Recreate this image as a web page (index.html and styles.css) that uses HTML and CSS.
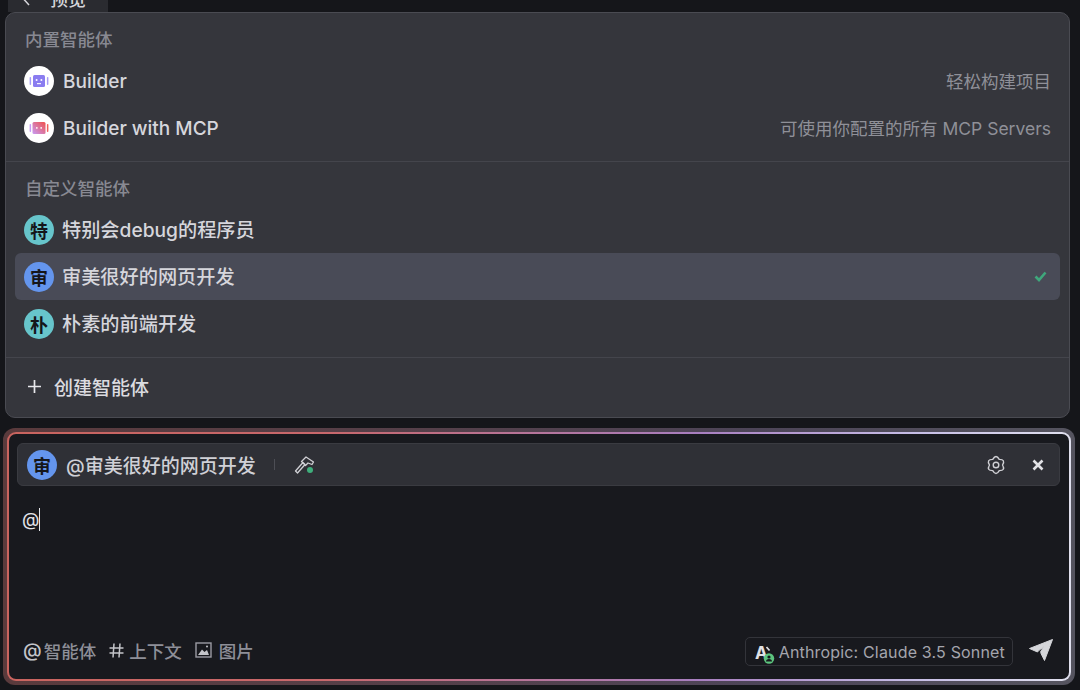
FILE: index.html
```html
<!DOCTYPE html>
<html lang="zh-CN">
<head>
<meta charset="utf-8">
<title>智能体</title>
<link rel="stylesheet" href="styles.css">
</head>
<body>
<div class="page">
  <div class="tab"><span class="tab-inner"><svg class="tab-chev" width="8" height="12" viewBox="0 0 8 12"><path d="M6 1 1.500 6 6 11" fill="none" stroke="#d5d5da" stroke-width="1.500"/></svg><span class="tab-text">预览</span></span></div>
  <section class="menu">
    <div class="group first">
      <div class="group-title">内置智能体</div>
      <div class="row">
        <span class="avatar white">
          <svg width="20" height="14" viewBox="0 0 20 14"><rect x="0.600" y="3" width="1.500" height="8" rx=".7" fill="#a79cf5"/><rect x="17.900" y="3" width="1.500" height="8" rx=".7" fill="#a79cf5"/><rect x="4" y="1" width="12" height="12" rx="1.500" fill="#8a7cf0"/><rect x="6.800" y="5" width="1.600" height="2" fill="#f4f2ff"/><rect x="11.600" y="5" width="1.600" height="2" fill="#f4f2ff"/><rect x="8" y="9" width="4" height="1.200" fill="#f4f2ff"/></svg>
        </span>
        <span class="name en">Builder</span>
        <span class="desc">轻松构建项目</span>
      </div>
      <div class="row">
        <span class="avatar white">
          <svg width="20" height="14" viewBox="0 0 20 14"><defs><linearGradient id="mcp" x1="1" y1="0" x2="0" y2="1"><stop offset="0" stop-color="#f0504a"/><stop offset="1" stop-color="#c79bf5"/></linearGradient></defs><rect x="0.600" y="3" width="1.500" height="8" rx=".7" fill="#c79bf5"/><rect x="17.900" y="3" width="1.500" height="8" rx=".7" fill="#f0605a"/><rect x="3.500" y="1" width="13" height="12" rx="1.500" fill="url(#mcp)"/><rect x="7" y="6" width="1.600" height="1.800" fill="#fbe6e6"/><rect x="11.400" y="6" width="1.600" height="1.800" fill="#fbe6e6"/></svg>
        </span>
        <span class="name en">Builder with MCP</span>
        <span class="desc">可使用你配置的所有 MCP Servers</span>
      </div>
    </div>
    <div class="group">
      <div class="group-title">自定义智能体</div>
      <div class="row">
        <span class="avatar teal">特</span>
        <span class="name">特别会debug的程序员</span>
      </div>
      <div class="row active">
        <span class="avatar blue">审</span>
        <span class="name">审美很好的网页开发</span>
        <svg class="check" width="13" height="11" viewBox="0 0 13 11"><path d="M1.500 5.500 5 9l6.500-7.500" fill="none" stroke="#3fa77c" stroke-width="2.600"/></svg>
      </div>
      <div class="row">
        <span class="avatar teal">朴</span>
        <span class="name">朴素的前端开发</span>
      </div>
    </div>
    <div class="create">
      <svg width="15" height="15" viewBox="0 0 15 15"><path d="M7.500 1v13M1 7.500h13" stroke="#e8e8ec" stroke-width="1.700"/></svg>
      <span>创建智能体</span>
    </div>
  </section>
  <section class="composer-ring">
    <div class="composer">
      <div class="agent-bar">
        <span class="avatar blue">审</span>
        <span class="agent-name">@审美很好的网页开发</span>
        <span class="bar-sep"></span>
        <svg class="hammer" width="22" height="22" viewBox="0 0 22 22"><path d="M1.500 17l2 2 7.500-8.500-2-2zM7.500 7.500 12 3l7.500 5-1.500 2.500-4-1.500-2.500 2.500z" fill="none" stroke="#d0d0d5" stroke-width="1.300" stroke-linejoin="round"/><circle cx="16" cy="16" r="3" fill="#3fae7c"/></svg>
        <span class="bar-spacer"></span>
        <svg class="gear" width="20" height="20" viewBox="0 0 20 20"><path d="M13.250 4.370Q19.870 4.300 16.500 10 19.870 15.700 13.250 15.630 10 21.400 6.750 15.630 .13 15.700 3.500 10 .13 4.300 6.750 4.370 10-1.400 13.250 4.370z" fill="none" stroke="#d0d0d5" stroke-width="1.400" stroke-linejoin="round"/><circle cx="10" cy="10" r="2.800" fill="none" stroke="#d0d0d5" stroke-width="1.400"/></svg>
        <svg class="close" width="12" height="12" viewBox="0 0 12 12"><path d="M1.500 1.500l9 9M10.500 1.500l-9 9" stroke="#e2e2e6" stroke-width="2.600"/></svg>
      </div>
      <div class="editor"><span class="at">@</span><span class="caret"></span></div>
      <div class="toolbar">
        <span class="tool"><span class="tool-sym">@</span>智能体</span>
        <span class="tool"><svg class="hash" width="15" height="15" viewBox="0 0 15 15"><path d="M5 .500 4 14.500M11 .500 10 14.500M.500 5h14M.500 10h14" fill="none" stroke="#c4c5ca" stroke-width="1.500"/></svg>上下文</span>
        <span class="tool"><svg class="pic" width="17" height="16" viewBox="0 0 17 16"><rect x="1" y="1" width="15" height="14" fill="none" stroke="#9a9ba3" stroke-width="1.400"/><path d="M3 13 7 7.500l2.500 2.500L12 8l2 5z" fill="#c4c5ca"/><circle cx="12" cy="4.500" r="1" fill="#c4c5ca"/></svg>图片</span>
        <span class="bar-spacer"></span>
        <span class="model">
          <span class="model-icon">
            <svg width="24" height="24" viewBox="0 0 24 24"><text class="model-a" x="0" y="19">A</text><path d="M11.500 7l3 3.500" stroke="#e0e0e4" stroke-width="1.700"/><circle cx="14" cy="18.500" r="5.200" fill="#5cc47e"/><circle cx="14" cy="17" r="1.600" fill="#17181c"/><path d="M10.900 21.500c.4-2 1.600-2.600 3.100-2.600s2.700.6 3.100 2.600z" fill="#17181c"/></svg>
          </span>
          <span class="model-name">Anthropic: Claude 3.5 Sonnet</span>
        </span>
        <svg class="send" width="26" height="26" viewBox="0 0 26 26"><path d="M24.500 2.500 1.500 11.500l8 3.500 1.500-1.700 5-3.800-3.300 5 .3 2 3.500 7z" fill="#d5d6da" stroke="#d5d6da" stroke-width="1" stroke-linejoin="round"/></svg>
      </div>
    </div>
  </section>
</div>
</body>
</html>
```
FILE: styles.css
```css
* { box-sizing: border-box; }
html, body { margin: 0; padding: 0; }
body {
  width: 1080px;
  height: 690px;
  overflow: hidden;
  background: #15161a;
  font-family: "Inter", "Noto Sans CJK SC", "Liberation Sans", sans-serif;
}
.page {
  display: flex;
  flex-direction: column;
  height: 690px;
  padding: 0 5px 0 3px;
}
.tab {
  margin-left: 5px;
  width: 100px;
  height: 12px;
  background: #2a2b30;
  overflow: hidden;
  position: relative;
  flex: none;
}
.tab-inner {
  position: absolute;
  left: 15px;
  bottom: 2px;
  display: flex;
  align-items: center;
  gap: 19px;
  color: #d5d5da;
  font-size: 18px;
  font-weight: 500;
  line-height: 20px;
}
.menu {
  flex: none;
  margin: 0 5px 0 2px;
  height: 406px;
  background: #35363c;
  border: 1px solid #4a4b52;
  border-radius: 10px;
  display: flex;
  flex-direction: column;
  padding: 0 9px;
}
.group {
  display: flex;
  flex-direction: column;
  margin: 0 -9px;
  padding: 14px 9px 0;
  height: 196px;
  border-bottom: 1px solid #44454c;
}
.group.first { height: 149px; }
.group-title {
  font-size: 17.500px;
  line-height: 26px;
  font-weight: 500;
  color: #888992;
  padding-left: 10px;
  height: 26px;
  margin-bottom: 4px;
}
.row {
  display: flex;
  align-items: center;
  height: 47px;
  padding: 0 9px;
  border-radius: 6px;
  flex: none;
}
.row.active { background: #494b57; }
.avatar {
  width: 30px;
  height: 30px;
  border-radius: 50%;
  display: flex;
  align-items: center;
  justify-content: center;
  font-size: 18px;
  font-weight: 700;
  color: #15161a;
  flex: none;
}
.avatar.white { background: #ffffff; }
.avatar.teal { background: #67c5cb; }
.avatar.blue { background: #6495ed; }
.name {
  margin-left: 8px;
  padding-bottom: 2px;
  font-size: 19.200px;
  font-weight: 500;
  color: #d6d6dc;
  flex: 1;
  white-space: nowrap;
}
.name.en {
  margin-left: 9px;
  padding-top: 2px;
  padding-bottom: 0;
  font-size: 19px;
}
.desc {
  font-size: 17.500px;
  color: #8f9098;
  white-space: nowrap;
}
.check { flex: none; transform: translateX(-4px); }
.create {
  flex: 1;
  display: flex;
  align-items: center;
  gap: 12px;
  padding: 0 0 2px 12px;
  color: #dcdce0;
  font-size: 19px;
  font-weight: 500;
}
.composer-ring {
  margin-top: 10px;
  height: 257px;
  flex: none;
  border-radius: 12px;
  padding: 4px;
  background: linear-gradient(90deg, #5a3a3c 0%, #55404a 40%, #4d4558 70%, #55545f 100%);
}
.composer {
  height: 100%;
  border-radius: 9px;
  border: 2px solid transparent;
  background:
    linear-gradient(#18191e, #18191e) padding-box,
    linear-gradient(90deg, #c9645f 0%, #c8686c 30%, #a87fc0 65%, #c6bde6 85%, #e0e0ee 100%) border-box;
  display: flex;
  flex-direction: column;
  padding: 9px 9px 0 8px;
}
.agent-bar {
  display: flex;
  align-items: center;
  height: 43px;
  flex: none;
  background: #2f3036;
  border: 1px solid #3a3b41;
  border-radius: 6px;
  padding: 0 15px 0 9px;
}
.agent-name {
  margin-left: 9px;
  padding-bottom: 1px;
  font-size: 19px;
  font-weight: 500;
  color: #d0d0d6;
  white-space: nowrap;
}
.bar-sep {
  width: 1px;
  height: 11px;
  margin-left: 18px;
  background: #4d4e55;
}
.hammer { margin-left: 19px; flex: none; }
.bar-spacer { flex: 1; }
.gear { flex: none; }
.close { flex: none; margin-left: 26px; }
.editor {
  flex: 1;
  display: flex;
  align-items: flex-start;
  padding: 22px 0 0 5px;
  color: #e4e4e8;
  font-size: 18px;
  line-height: 24px;
}
.caret {
  width: 1px;
  height: 23px;
  background: #e4e4e8;
}
.toolbar {
  display: flex;
  align-items: center;
  flex: none;
  height: 44px;
  margin-bottom: 7px;
  padding-left: 6px;
  padding-right: 6px;
  color: #8e8f98;
  font-size: 17.500px;
  font-weight: 500;
}
.tool {
  display: flex;
  align-items: center;
  margin-right: 13px;
  white-space: nowrap;
}
.tool-sym {
  color: #c4c5ca;
  font-size: 19px;
  margin-right: 2px;
}
.hash { margin-right: 5px; flex: none; }
.pic { margin-right: 7px; flex: none; }
.model {
  display: flex;
  align-items: center;
  height: 29px;
  margin-top: 3px;
  padding: 0 7px 0 9px;
  border: 1px solid #33343a;
  border-radius: 5px;
  margin-right: 15px;
}
.model-icon { display: flex; width: 24px; flex: none; }
.model-a {
  font-size: 17px;
  font-weight: 700;
  fill: #e0e0e4;
}
.model-name {
  font-size: 16px;
  font-weight: 400;
  letter-spacing: 0.170px;
  color: #a4a5ad;
  white-space: nowrap;
}
.send { flex: none; }
```
